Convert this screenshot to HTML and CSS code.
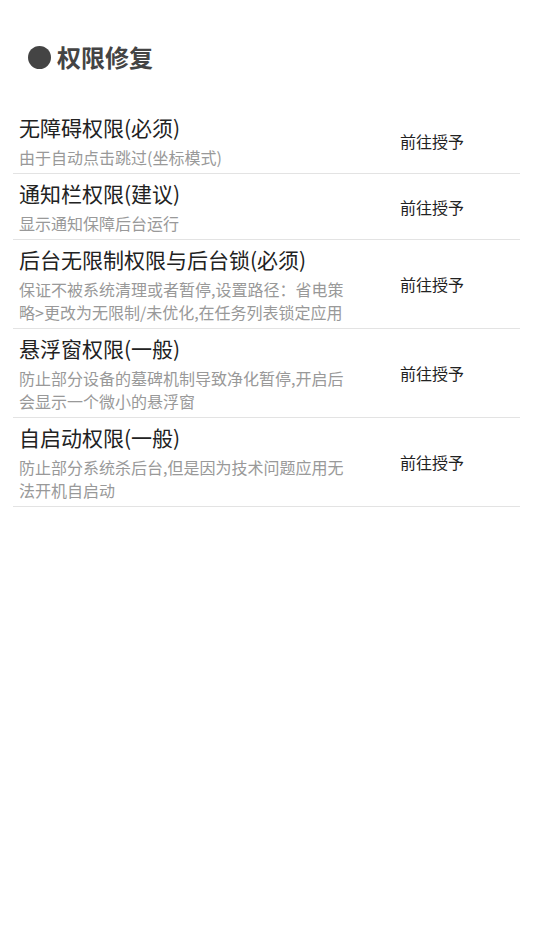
FILE: index.html
```html
<!DOCTYPE html>
<html>
    <head>
        <title>权限修复</title>
        <meta charset="utf-8">
        <link rel="stylesheet" href="styles.css">
    </head>
    <body>
      <div class="header">
        <span class="dot"></span>
        <h2>权限修复</h2>
      </div>
      <ul class="permList">
        <li>
          <div class="info">
            <div class="title">无障碍权限(必须)</div>
            <div class="desc">由于自动点击跳过(坐标模式)</div>
          </div>
          <span class="grant">前往授予</span>
        </li>
        <li>
          <div class="info">
            <div class="title">通知栏权限(建议)</div>
            <div class="desc">显示通知保障后台运行</div>
          </div>
          <span class="grant">前往授予</span>
        </li>
        <li>
          <div class="info">
            <div class="title">后台无限制权限与后台锁(必须)</div>
            <div class="desc">保证不被系统清理或者暂停,设置路径：省电策略&gt;更改为无限制/未优化,在任务列表锁定应用</div>
          </div>
          <span class="grant">前往授予</span>
        </li>
        <li>
          <div class="info">
            <div class="title">悬浮窗权限(一般)</div>
            <div class="desc">防止部分设备的墓碑机制导致净化暂停,开启后会显示一个微小的悬浮窗</div>
          </div>
          <span class="grant">前往授予</span>
        </li>
        <li>
          <div class="info">
            <div class="title">自启动权限(一般)</div>
            <div class="desc">防止部分系统杀后台,但是因为技术问题应用无法开机自启动</div>
          </div>
          <span class="grant">前往授予</span>
        </li>
      </ul>
    </body>
</html>
```

FILE: styles.css
```css
* {
  box-sizing: border-box;
}

body {
  margin: 0;
  background: #fff;
  font-family: "Noto Sans CJK SC", "Noto Sans", sans-serif;
}

/* Section header with the round bullet */
.header {
  display: flex;
  align-items: center;
  padding: 40px 28px 0;
  height: 74px;
}

.dot {
  width: 23px;
  height: 23px;
  border-radius: 50%;
  background: #444;
  margin-right: 6px;
}

.header h2 {
  margin: 0;
  font-size: 24px;
  line-height: 34px;
  font-weight: bold;
  color: #444;
}

/* Permission rows */
.permList {
  list-style: none;
  margin: 34px 14px 0 13px;
  padding: 0;
}

.permList li {
  display: flex;
  align-items: center;
  padding: 4px 0;
  border-bottom: 1px solid #e3e3e3;
}

.info {
  flex: 1;
  padding-left: 6px;
}

.title {
  font-size: 21px;
  line-height: 30px;
  margin-bottom: 4px;
  color: #222;
}

.desc {
  font-size: 16px;
  line-height: 23px;
  color: #999;
}

.grant {
  width: 176px;
  text-align: center;
  font-size: 16px;
  color: #222;
  cursor: pointer;
}
```
